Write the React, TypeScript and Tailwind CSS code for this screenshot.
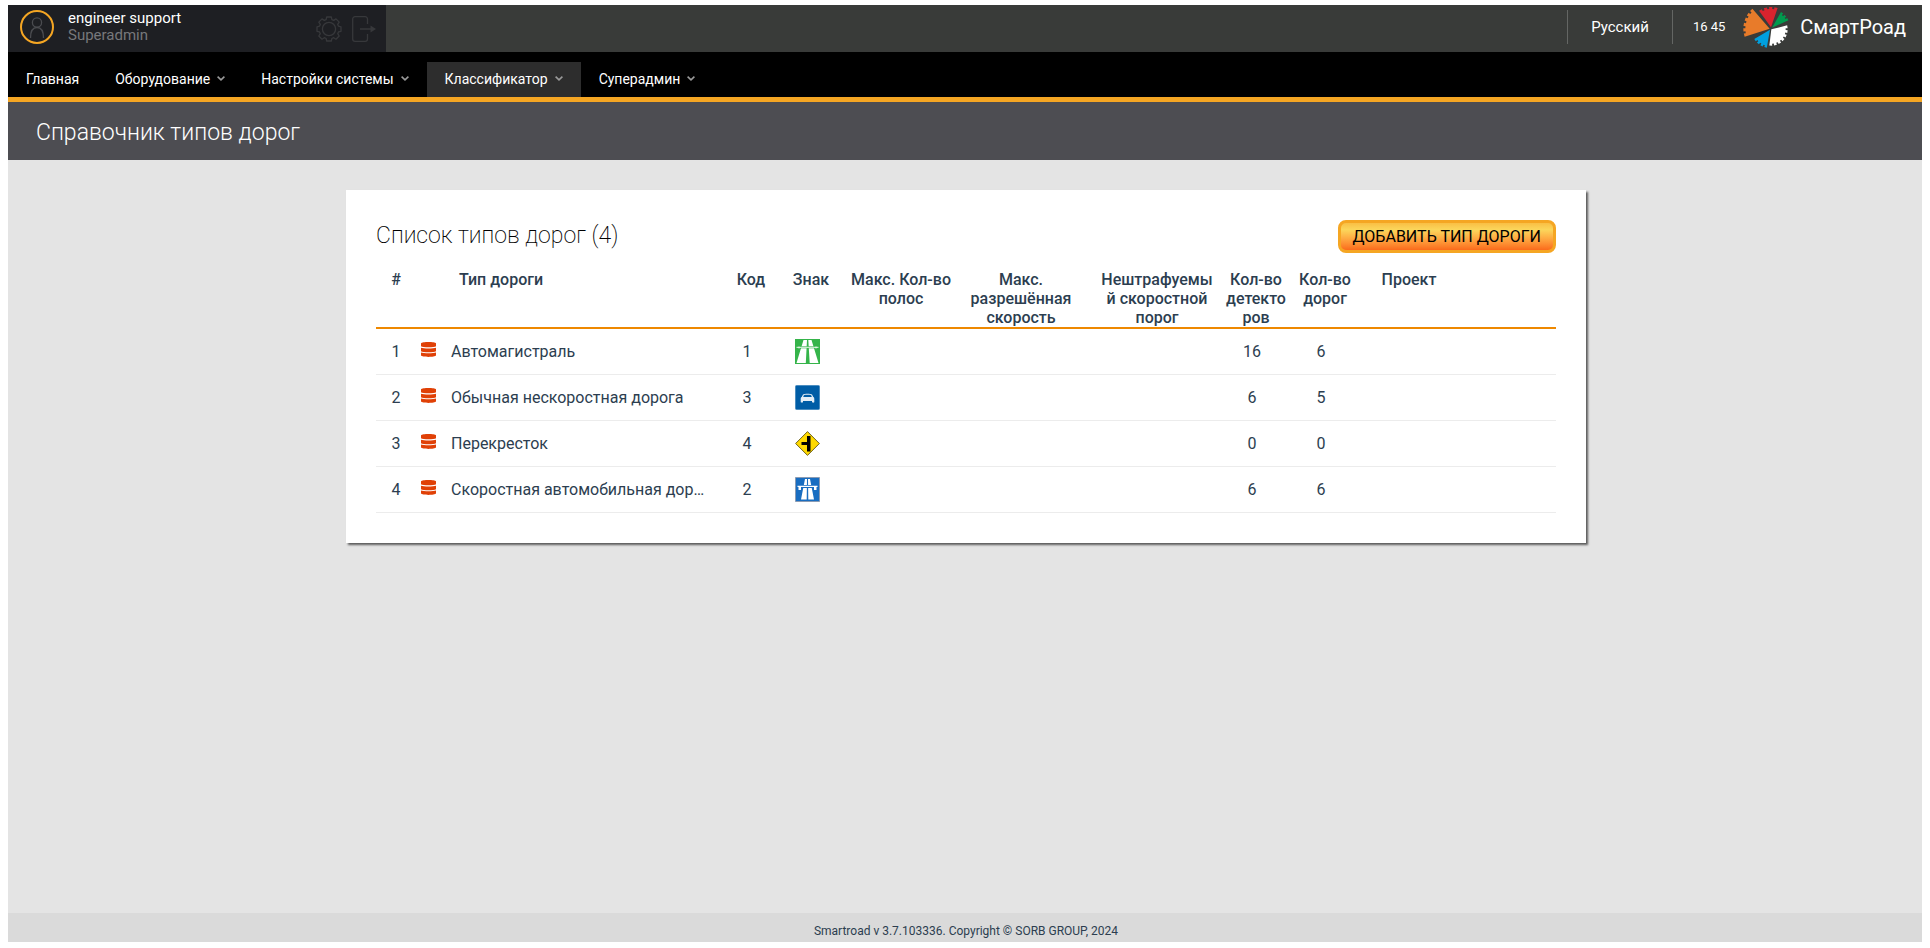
import type { ReactNode } from "react";
import clsx from "clsx";

type Sign = "motorway" | "car" | "crossing" | "expressway";

interface RoadType {
  id: number;
  name: string;
  code: number;
  sign: Sign;
  detectors: number;
  roads: number;
}

const menu = [
  { title: "Главная", submenu: false, active: false },
  { title: "Оборудование", submenu: true, active: false },
  { title: "Настройки системы", submenu: true, active: false },
  { title: "Классификатор", submenu: true, active: true },
  { title: "Суперадмин", submenu: true, active: false },
];

const roadTypes: RoadType[] = [
  { id: 1, name: "Автомагистраль", code: 1, sign: "motorway", detectors: 16, roads: 6 },
  { id: 2, name: "Обычная нескоростная дорога", code: 3, sign: "car", detectors: 6, roads: 5 },
  { id: 3, name: "Перекресток", code: 4, sign: "crossing", detectors: 0, roads: 0 },
  { id: 4, name: "Скоростная автомобильная дорога", code: 2, sign: "expressway", detectors: 6, roads: 6 },
];

// one toothed slice of the logo wheel, angles in degrees
function slice(cx: number, cy: number, r: number, from: number, to: number, teeth: number) {
  const point = (angle: number, radius: number) => {
    const rad = (angle * Math.PI) / 180;
    return `${(cx + radius * Math.cos(rad)).toFixed(1)} ${(cy + radius * Math.sin(rad)).toFixed(1)}`;
  };
  // a tooth is a bit wider than the gap after it
  const unit = (to - from) / (teeth * 5 - 2);
  const points: string[] = [];
  for (let i = 0; i < teeth; i++) {
    const start = from + unit * 5 * i;
    const end = start + unit * 3;
    points.push(point(start, r), point(end, r));
    if (i < teeth - 1) points.push(point(end, r - 6), point(end + unit * 2, r - 6));
  }
  return `M${cx} ${cy}L${points.join("L")}Z`;
}

function Logo() {
  return (
    <svg viewBox="42 21 138 123" className="h-[41px] w-[46px]" aria-hidden="true">
      <path fill="#e87b2a" d={slice(122, 86, 79, 162, 229, 6)} />
      <path fill="#d9232e" d={slice(126, 82, 61, 234, 289, 4)} />
      <path fill="#009a4e" d={slice(129, 83, 54, 300, 336, 3)} />
      <path fill="#ffffff" d={slice(127, 88, 49, -14, 97, 7)} />
      <path fill="#00a0df" d={slice(123, 89, 55, 100, 149, 4)} />
    </svg>
  );
}

function Avatar() {
  return (
    <svg viewBox="0 0 34 34" className="size-[34px] shrink-0" fill="none" aria-hidden="true">
      <circle cx="17" cy="17" r="16" stroke="#f5a623" strokeWidth="2" />
      <circle cx="17" cy="12.500" r="4.600" stroke="#4b4c50" strokeWidth="1.300" />
      <path d="M10.500 28c0-6 2.200-10.500 6.500-10.500s6.500 4.500 6.500 10.500" stroke="#4b4c50" strokeWidth="1.300" />
    </svg>
  );
}

function Gear() {
  return (
    <svg viewBox="0 0 26 26" className="size-[26px]" fill="none" stroke="#37383b" strokeWidth="1.300" strokeLinejoin="round" aria-hidden="true">
      <circle cx="13" cy="13" r="6.600" />
      <path d="M10.700 1h4.600l.6 2.600 1.800.8 2.300-1.500 3.200 3.200-1.500 2.300.8 1.800 2.500.6v4.500l-2.500.6-.8 1.800 1.500 2.300-3.200 3.200-2.300-1.500-1.800.8-.6 2.500h-4.600l-.6-2.500-1.800-.8L6 23.200 2.800 20l1.500-2.300-.8-1.800L1 15.300v-4.500l2.500-.6.8-1.800L2.800 6.100 6 2.900l2.300 1.500 1.800-.8z" />
    </svg>
  );
}

function Exit() {
  return (
    <svg viewBox="0 0 24 26" className="h-[26px] w-6" fill="none" stroke="#37383b" strokeWidth="1.300" aria-hidden="true">
      <path d="M15.500 8V3a2.300 2.300 0 0 0-2.300-2.300H3A2.300 2.300 0 0 0 .7 3v20A2.300 2.300 0 0 0 3 25.300h10.200a2.300 2.300 0 0 0 2.300-2.300v-5" />
      <path d="M8 13h12" strokeWidth="1.500" />
      <path d="M18.500 9.500 24 13l-5.500 3.500z" fill="#37383b" stroke="none" />
    </svg>
  );
}

function Chevron() {
  return (
    <svg viewBox="0 0 8 5" className="h-[5px] w-2" fill="none" stroke="#9a9a9a" strokeWidth="1.600" aria-hidden="true">
      <path d="m.6.7 3.400 3.200L7.400.7" />
    </svg>
  );
}

function Database() {
  return (
    <svg viewBox="0 0 15 15" className="mx-auto mb-1 size-[15px]" fill="#e04006" aria-hidden="true">
      <path d="M0 1.300C1-.4 14-.4 15 1.300v3c-1.500 1.300-13.500 1.300-15 0z" />
      <path d="M0 5.700c2.500.9 12.500.9 15 0v3.500c-1.500 1.300-13.500 1.300-15 0z" />
      <path d="M0 10.600c2.500.9 12.500.9 15 0v3c-1 1.800-14 1.800-15 0z" />
    </svg>
  );
}

function SignIcon({ sign }: { sign: Sign }) {
  return (
    <svg viewBox="0 0 25 25" className="mx-auto size-[25px]" aria-hidden="true">
      {sign === "motorway" && (
        <>
          <path fill="#35b44a" d="M0 0h25v25H0z" />
          <path fill="#fff" d="M8.500 1H12l-1.200 23H1.500zM13.300 1h3.200l7 23h-8.800z" />
          <path stroke="#35b44a" strokeWidth="2" d="M1 8.300h23" />
          <path stroke="#fff" strokeWidth=".9" d="M1.500 8.300h22" />
          <path stroke="#fff" strokeWidth=".8" d="M4 7.500v2M21 7.500v2" />
        </>
      )}
      {sign === "car" && (
        <>
          <rect x=".5" y=".5" width="24" height="24" rx="1" fill="#005da6" stroke="#4b8dc0" />
          <path fill="#e4eef6" d="M8 9.500c1.500-.9 7.500-.9 9 0l1.300 2.600c.8.4 1 1 1 2v2.700c0 1.200-2.300 1.200-2.300 0v-.8H8v.8c0 1.200-2.300 1.200-2.300 0v-2.700c0-1 .2-1.600 1-2z" />
          <path fill="#005da6" d="M8.800 10.200c1.500-.5 5.900-.5 7.400 0l.6 1.700H8.200z" />
        </>
      )}
      {sign === "crossing" && (
        <>
          <path fill="#ffd900" stroke="#5e5518" strokeWidth=".9" strokeLinejoin="round" d="M12.500.6 24.400 12.500 12.500 24.400.6 12.500z" />
          <path fill="#000" d="M12 5h3.500v15.500H12V14H6.500v-3H12z" />
        </>
      )}
      {sign === "expressway" && (
        <>
          <path fill="#186dc1" stroke="#8a9bb3" d="M.5.500h24v24H.5z" />
          <path fill="#fff" d="M10 2h2l-.3 20.500H6zM13 2h2l4 20.500h-5.700z" />
          <path stroke="#186dc1" strokeWidth="3" d="M2 9.500h21" />
          <path fill="#fff" d="M2.500 8.800h20v1.200h-1V13h-2.500v-3H6v3H3.500v-3h-1z" />
        </>
      )}
    </svg>
  );
}

function HeadCell({ children, className }: { children?: ReactNode; className?: string }) {
  return (
    <th scope="col" className={clsx("p-0 align-top font-medium wrap-break-word", className)}>
      {children}
    </th>
  );
}

function TopBar() {
  return (
    <header className="flex h-[47px] justify-between bg-[#393b39] text-white">
      <div className="flex w-[378px] items-center bg-[#1e1f23] pr-2.5 pb-[3px] pl-3">
        <Avatar />
        <div className="ml-3.5 text-[15px] leading-[17px]">
          <div>engineer support</div>
          <div className="text-[#77787b]">Superadmin</div>
        </div>
        <div className="mt-[3px] ml-auto flex items-center gap-2.5">
          <button type="button" aria-label="Настройки">
            <Gear />
          </button>
          <button type="button" aria-label="Выход">
            <Exit />
          </button>
        </div>
      </div>
      <div className="flex items-center pr-4 pb-[3px]">
        <button type="button" className="h-[34px] border-x border-[#646664] px-[23px] text-[15px]">
          Русский
        </button>
        <time className="ml-5 text-[13px]">16 45</time>
        <a href="#" className="ml-[18px] flex items-center gap-[11px] text-xl">
          <Logo />
          СмартРоад
        </a>
      </div>
    </header>
  );
}

function MainMenu() {
  return (
    <nav className="flex h-[50px] items-end border-b-[5px] border-[#f5a623] bg-black text-sm text-white">
      {menu.map((item) => (
        <a
          key={item.title}
          href="#"
          className={clsx("flex h-[35px] items-center gap-[7px] px-[18px] pb-0.5", item.active && "bg-[#2d2d2d]")}
        >
          {item.title}
          {item.submenu && <Chevron />}
        </a>
      ))}
    </nav>
  );
}

export default function App() {
  return (
    <div className="flex min-h-screen flex-col bg-white px-2 pt-[5px] pb-1.5 font-['Roboto',sans-serif]">
      <TopBar />
      <MainMenu />
      <h1 className="bg-[#4d4d52] px-7 pt-3.5 pb-2.5 text-[23px] leading-[34px] font-light text-white">
        Справочник типов дорог
      </h1>

      <main className="grow bg-[#e4e4e4] py-[30px] pl-0.5">
        <section className="mx-auto max-w-[1240px] bg-white p-[30px] shadow-[2px_2px_2px_rgba(0,0,0,0.6)]">
          <div className="flex h-[50px] items-start justify-between">
            <h2 className="text-[23px] leading-8 font-extralight text-black">Список типов дорог (4)</h2>
            <button
              type="button"
              className="h-[33px] rounded-lg border-3 border-[#f5a623] bg-linear-to-b from-[#f9bf45] via-[#fbd65b] via-25% to-[#fa6a1b] px-3 text-base leading-[27px] text-black uppercase"
            >
              Добавить тип дороги
            </button>
          </div>

          <table className="w-full table-fixed text-base leading-[19px] text-[#2c3e50]">
            <colgroup>
              <col className="w-10" />
              <col className="w-[25px]" />
              <col className="w-[276px]" />
              <col className="w-[60px]" />
              <col className="w-[60px]" />
              <col className="w-[120px]" />
              <col className="w-[120px]" />
              <col className="w-[140px]" />
              <col className="w-[70px]" />
              <col className="w-[68px]" />
              <col className="w-[100px]" />
              <col />
            </colgroup>
            <thead>
              <tr className="h-[58px] border-b-2 border-[#ee8800]">
                <HeadCell>#</HeadCell>
                <HeadCell />
                <HeadCell className="pl-[18px] text-left">Тип дороги</HeadCell>
                <HeadCell className="pl-2">Код</HeadCell>
                <HeadCell className="pl-2">Знак</HeadCell>
                <HeadCell className="pl-2">Макс. Кол-во полос</HeadCell>
                <HeadCell className="pl-2">Макс. разрешённая скорость</HeadCell>
                <HeadCell className="pr-1 pl-6">Нештрафуемый скоростной порог</HeadCell>
                <HeadCell className="pl-2">Кол-во детекторов</HeadCell>
                <HeadCell className="pl-2">Кол-во дорог</HeadCell>
                <HeadCell className="pl-2">Проект</HeadCell>
                <HeadCell />
              </tr>
            </thead>
            <tbody>
              {roadTypes.map((road) => (
                <tr key={road.id} className="h-[46px] border-b border-[#ececec] text-center">
                  <td>{road.id}</td>
                  <td>
                    <Database />
                  </td>
                  <td className="truncate pr-1.5 pl-2.5 text-left">{road.name}</td>
                  <td>{road.code}</td>
                  <td>
                    <SignIcon sign={road.sign} />
                  </td>
                  <td />
                  <td />
                  <td />
                  <td>{road.detectors}</td>
                  <td>{road.roads}</td>
                  <td />
                  <td />
                </tr>
              ))}
            </tbody>
          </table>
        </section>
      </main>

      <footer className="h-[29px] bg-[#dadada] pt-2.5 pl-0.5 text-center text-xs text-[#2c3e50]">
        Smartroad v 3.7.103336. Copyright © SORB GROUP, 2024
      </footer>
    </div>
  );
}
